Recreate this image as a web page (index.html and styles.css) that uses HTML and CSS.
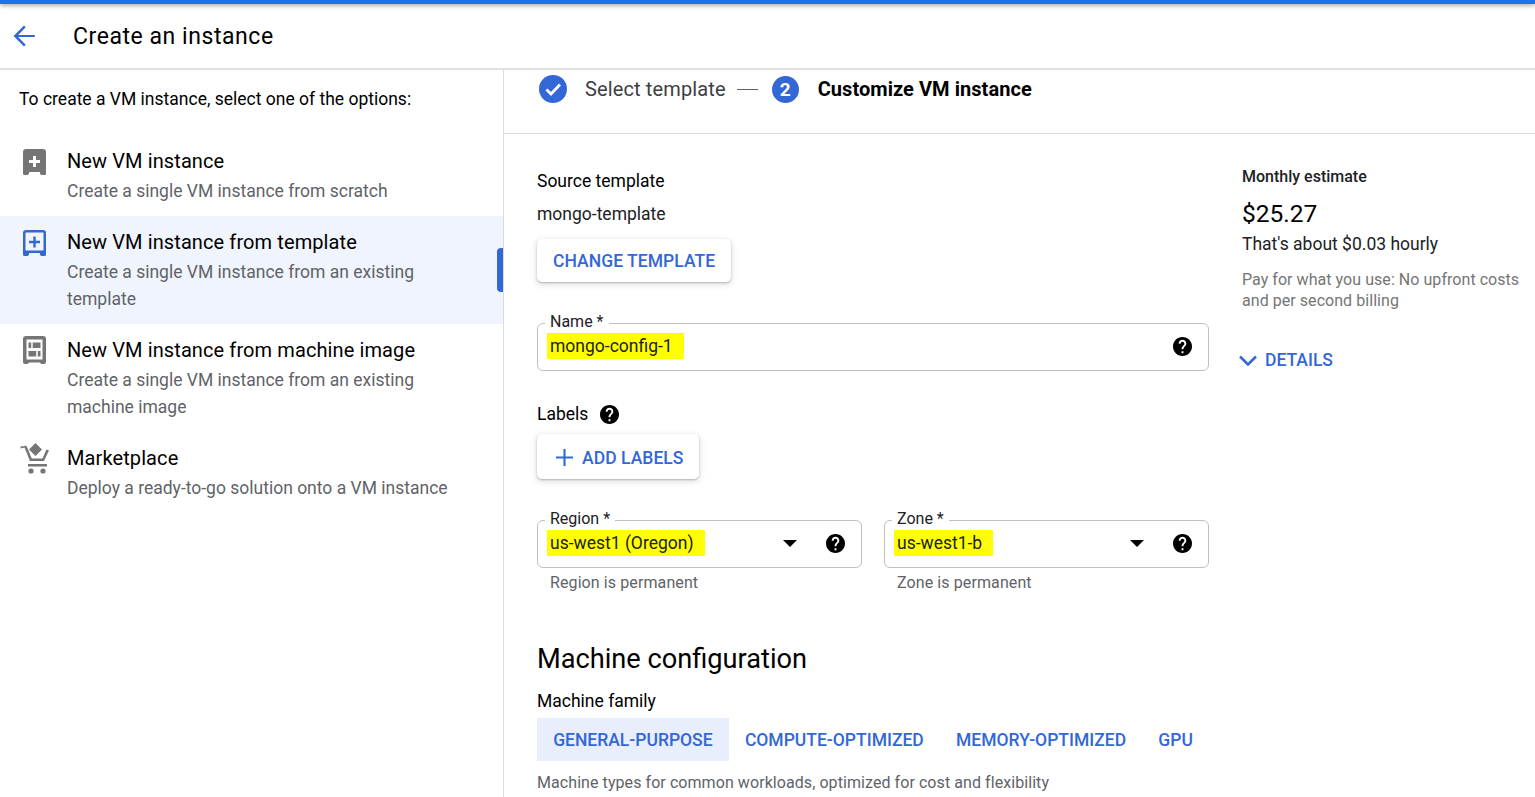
FILE: index.html
```html
<!DOCTYPE html>
<html lang="en">
<head>
    <meta charset="UTF-8">
    <meta name="viewport" content="width=device-width, initial-scale=1.0">
    <title>Create an instance</title>
    <link rel="stylesheet" href="styles.css">
</head>
<body>
    <svg class="defs" width="0" height="0" aria-hidden="true">
        <symbol id="help" viewBox="2 2 20 20">
            <path d="M12 2C6.48 2 2 6.48 2 12s4.48 10 10 10 10-4.48 10-10S17.52 2 12 2zm1 17h-2v-2h2v2zm2.07-7.75l-.9.92C13.45 12.9 13 13.5 13 15h-2v-.5c0-1.1.45-2.1 1.17-2.83l1.24-1.26c.37-.36.59-.86.59-1.41 0-1.1-.9-2-2-2s-2 .9-2 2H8c0-2.21 1.79-4 4-4s4 1.79 4 4c0 .88-.36 1.68-.93 2.25z"/>
        </symbol>
    </svg>

    <div class="topline"></div>
    <header class="page-header">
        <svg class="back" viewBox="0 0 24 24" width="26" height="26"><path d="M22 11H6.600l7-7L12 2.400 2.400 12l9.600 9.600 1.600-1.600-7-7H22z"/></svg>
        <h1>Create an instance</h1>
    </header>

    <div class="page-body">
        <nav class="options">
            <p class="intro">To create a VM instance, select one of the options:</p>

            <a class="option">
                <svg class="option-icon" viewBox="0 0 23 26"><path fill-rule="evenodd" d="M3 0h17a3 3 0 0 1 3 3v21.500a1.500 1.500 0 0 1-1.500 1.500h-2.500a2 2 0 0 1-2-2.500a.5.500 0 0 0-.5-.5H6.500a.5.500 0 0 0-.5.500a2 2 0 0 1-2 2.500H1.500A1.500 1.500 0 0 1 0 24.500V3a3 3 0 0 1 3-3zm7 7v4H6v3h4v4h3v-4h4v-3h-4V7z"/></svg>
                <div>
                    <div class="option-title">New VM instance</div>
                    <div class="option-sub">Create a single VM instance from scratch</div>
                </div>
            </a>

            <a class="option selected">
                <svg class="option-icon" viewBox="0 0 23 26"><path fill-rule="evenodd" d="M3 0h17a3 3 0 0 1 3 3v21.500a1.500 1.500 0 0 1-1.500 1.500h-2.500a2 2 0 0 1-2-2.500a.5.500 0 0 0-.5-.5H6.500a.5.500 0 0 0-.5.500a2 2 0 0 1-2 2.500H1.500A1.500 1.500 0 0 1 0 24.500V3a3 3 0 0 1 3-3zm0 2.500a.5.500 0 0 0-.5.500v17a.5.500 0 0 0 .5.500h17a.5.500 0 0 0 .5-.5V3a.5.500 0 0 0-.5-.5zM10.300 6.500v4.300H6v2.400h4.300v4.300h2.400v-4.300H17v-2.400h-4.300V6.500z"/></svg>
                <div>
                    <div class="option-title">New VM instance from template</div>
                    <div class="option-sub">Create a single VM instance from an existing template</div>
                </div>
                <span class="scroll-mark"></span>
            </a>

            <a class="option">
                <svg class="option-icon tall" viewBox="0 0 23 28"><path fill-rule="evenodd" d="M3 0h17a3 3 0 0 1 3 3v23a2 2 0 0 1-2 2h-2a2 2 0 0 1-2-1.500H6a2 2 0 0 1-2 1.500H2a2 2 0 0 1-2-2V3a3 3 0 0 1 3-3zm.500 3.500v20h16v-20zM5.500 6.500H8.200v5.500H5.500zM9.700 6.500H17.500v5.500H9.700zM5.500 15H13.200v5.500H5.500zM14.800 15h2.700v5.500h-2.700z"/></svg>
                <div>
                    <div class="option-title">New VM instance from machine image</div>
                    <div class="option-sub">Create a single VM instance from an existing machine image</div>
                </div>
            </a>

            <a class="option">
                <svg class="option-icon cart" viewBox="0 0 30 31"><path d="M15.500 0l6.500 6.500-6.500 6.500L9 6.500zM0.500 5.500L4.500 4.500 10 18h14L29 7.500l-2.600-1-3.900 9H11.800L6.400 2.700.500 3.500zM8 21h19v2.500H8z"/><circle cx="11" cy="28" r="2.600"/><circle cx="23" cy="28" r="2.600"/></svg>
                <div>
                    <div class="option-title">Marketplace</div>
                    <div class="option-sub">Deploy a ready-to-go solution onto a VM instance</div>
                </div>
            </a>
        </nav>

        <main class="content">
            <div class="stepper">
                <svg class="step-icon" viewBox="0 0 28 28"><circle cx="14" cy="14" r="14"/><path class="tick" d="M7.500 14.500l4.500 4.500 9-9.500"/></svg>
                <span class="step-name">Select template</span>
                <span class="step-dash"></span>
                <span class="step-num">2</span>
                <strong class="step-current">Customize VM instance</strong>
            </div>

            <div class="columns">
                <form class="form">
                    <div class="label source-label">Source template</div>
                    <div class="source-value">mongo-template</div>
                    <button type="button" class="raised change-btn">CHANGE TEMPLATE</button>

                    <div class="field name-field">
                        <label class="field-label">Name *</label>
                        <span class="marked">mongo-config-1</span>
                        <svg class="help"><use href="#help"/></svg>
                    </div>

                    <div class="label labels-row">Labels <svg class="help"><use href="#help"/></svg></div>
                    <button type="button" class="raised add-btn">
                        <svg viewBox="0 0 16 16" width="17" height="17"><path d="M7 0h2v7h7v2H9v7H7V9H0V7h7z"/></svg>
                        ADD LABELS
                    </button>

                    <div class="field-pair">
                        <div>
                            <div class="field">
                                <label class="field-label">Region *</label>
                                <span class="marked">us-west1 (Oregon)</span>
                                <span class="caret"></span>
                                <svg class="help"><use href="#help"/></svg>
                            </div>
                            <div class="hint">Region is permanent</div>
                        </div>
                        <div>
                            <div class="field">
                                <label class="field-label">Zone *</label>
                                <span class="marked">us-west1-b</span>
                                <span class="caret"></span>
                                <svg class="help"><use href="#help"/></svg>
                            </div>
                            <div class="hint">Zone is permanent</div>
                        </div>
                    </div>

                    <h2>Machine configuration</h2>
                    <div class="label family-label">Machine family</div>
                    <div class="tabs">
                        <span class="tab active">GENERAL-PURPOSE</span>
                        <span class="tab">COMPUTE-OPTIMIZED</span>
                        <span class="tab">MEMORY-OPTIMIZED</span>
                        <span class="tab">GPU</span>
                    </div>
                    <div class="tab-note">Machine types for common workloads, optimized for cost and flexibility</div>
                </form>

                <aside class="estimate">
                    <div class="estimate-title">Monthly estimate</div>
                    <div class="estimate-price">$25.27</div>
                    <div class="estimate-hourly">That's about $0.03 hourly</div>
                    <div class="estimate-note">Pay for what you use: No upfront costs and per second billing</div>
                    <div class="details">
                        <svg viewBox="0 0 18 11" width="18" height="11"><path d="M1 1.500l8 8 8-8"/></svg>
                        DETAILS
                    </div>
                </aside>
            </div>
        </main>
    </div>
</body>
</html>
```

FILE: styles.css
```css
* {
    box-sizing: border-box;
}
html, body {
    height: 100%;
}
body {
    margin: 0;
    height: 797px;
    overflow: hidden;
    display: flex;
    flex-direction: column;
    background: #fff;
    color: #202124;
    font-family: Roboto, "Liberation Sans", sans-serif;
    font-size: 17.5px;
}
.defs {
    position: absolute;
}

.topline {
    height: 4px;
    flex: none;
    background: #1a73e8;
    box-shadow: 0 1px 5px rgba(0, 0, 0, 0.45);
}
.page-header {
    height: 66px;
    flex: none;
    display: flex;
    align-items: center;
    padding: 0 0 0 11px;
    border-bottom: 2px solid #e0e0e0;
}
.back {
    fill: #3367d6;
    margin-right: 36px;
}
h1 {
    margin: 0;
    font-size: 23px;
    font-weight: 400;
    color: #000;
    letter-spacing: 0.55px;
}
.page-body {
    flex: 1;
    display: flex;
    min-height: 0;
}

/* left list */
.options {
    width: 504px;
    flex: none;
    border-right: 1px solid #dadce0;
}
.intro {
    margin: 0;
    padding: 16px 0 0 19px;
    height: 65px;
    line-height: 26px;
    font-size: 17.5px;
    color: #000;
}
.option {
    position: relative;
    display: flex;
    padding: 11px 24px 11px 23px;
}
.option.selected {
    background: #f0f4fc;
}
.option-icon {
    width: 23px;
    height: 26px;
    flex: none;
    margin: 3px 21px 0 0;
    fill: #757575;
}
.selected .option-icon {
    fill: #3367d6;
}
.option-icon.tall {
    height: 28px;
    margin-top: 1px;
}
.option-icon.cart {
    width: 30px;
    height: 31px;
    margin: 0 17px 0 -3px;
}
.option-title {
    font-size: 20px;
    line-height: 30px;
    letter-spacing: 0.1px;
    color: #000;
    margin-bottom: 2px;
}
.option-sub {
    line-height: 27px;
    color: #5f6368;
}
.scroll-mark {
    position: absolute;
    right: 0;
    top: 32px;
    width: 6px;
    height: 44px;
    background: #3367d6;
    border-radius: 4px 0 0 4px;
}

/* right side */
.content {
    flex: 1;
    min-width: 0;
}
.stepper {
    height: 64px;
    padding: 5px 0 0 35px;
    display: flex;
    align-items: flex-start;
    border-bottom: 1px solid #dadce0;
    font-size: 20px;
    line-height: 28px;
}
.step-icon {
    width: 28px;
    height: 28px;
    fill: #3367d6;
    margin-right: 18px;
}
.tick {
    fill: none;
    stroke: #fff;
    stroke-width: 2.800;
}
.step-name {
    color: #3c4043;
    letter-spacing: 0.13px;
}
.step-dash {
    width: 21px;
    height: 1px;
    margin: 14px 14px 0 11px;
    background: #5f6368;
}
.step-num {
    width: 27px;
    height: 27px;
    margin-top: 1px;
    border-radius: 50%;
    background: #3367d6;
    color: #fff;
    font-size: 19px;
    font-weight: 700;
    line-height: 27px;
    text-align: center;
    margin-right: 19px;
}
.step-current {
    font-weight: 700;
    letter-spacing: 0.05px;
    color: #000;
}
.columns {
    display: flex;
    padding: 0 0 0 33px;
}
.form {
    width: 672px;
    flex: none;
    padding-top: 34px;
}
.label {
    line-height: 26px;
    color: #000;
}
.source-value {
    margin-top: 7px;
    line-height: 26px;
    color: #202124;
}
.raised {
    display: flex;
    align-items: center;
    border: 0;
    border-radius: 5px;
    background: #fff;
    color: #3367d6;
    font: 500 17.5px Roboto, "Liberation Sans", sans-serif;
    letter-spacing: 0.05px;
    white-space: nowrap;
    padding: 0 16px;
    box-shadow: 0 1px 2px rgba(60, 64, 67, 0.3), 0 2px 6px 1px rgba(60, 64, 67, 0.15);
}
.change-btn {
    margin-top: 12px;
    height: 43px;
    width: 194px;
}
.add-btn {
    margin-top: 7px;
    height: 45px;
    width: 162px;
    padding: 2px 0 0 19px;
    gap: 9px;
}
.add-btn svg {
    fill: #3367d6;
}
.field {
    position: relative;
    height: 48px;
    padding: 0 16px 0 9px;
    display: flex;
    align-items: center;
    border: 1px solid #bdc1c6;
    border-radius: 6px;
}
.name-field {
    margin-top: 41px;
}
.field-label {
    position: absolute;
    left: 7px;
    top: -11px;
    padding: 0 5px;
    background: #fff;
    font-size: 16px;
    line-height: 18px;
    color: #202124;
}
.marked {
    display: block;
    background: #ffff00;
    height: 26px;
    margin-bottom: 2px;
    padding: 0 11px 0 3px;
    line-height: 26px;
    color: #202124;
    white-space: nowrap;
}
.help {
    width: 19px;
    height: 19px;
    fill: #000;
    flex: none;
}
.field .help {
    margin: 0 0 2px auto;
}
.caret {
    width: 0;
    height: 0;
    margin: 0 0 2px auto;
    border-top: 7px solid #000;
    border-left: 7px solid transparent;
    border-right: 7px solid transparent;
}
.field .caret + .help {
    margin-left: 29px;
}
.labels-row {
    margin-top: 30px;
    display: flex;
    align-items: center;
    gap: 12px;
}
.field-pair {
    margin-top: 41px;
    display: grid;
    grid-template-columns: 325px 325px;
    gap: 22px;
}
.hint {
    padding: 5px 0 0 13px;
    font-size: 16px;
    line-height: 20px;
    letter-spacing: 0.1px;
    color: #5f6368;
}
h2 {
    margin: 48px 0 0;
    font-size: 27.200px;
    font-weight: 400;
    line-height: 36px;
    color: #000;
}
.family-label {
    margin-top: 11px;
}
.tabs {
    margin-top: 4px;
    display: flex;
}
.tab {
    height: 43px;
    padding: 0 16.150px;
    line-height: 45px;
    font-weight: 500;
    color: #3367d6;
    white-space: nowrap;
}
.tab.active {
    background: #e8eefb;
}
.tab-note {
    margin-top: 11px;
    font-size: 16px;
    line-height: 22px;
    letter-spacing: 0.07px;
    color: #5f6368;
}

.estimate {
    margin-left: 33px;
    padding-top: 31px;
    width: 293px;
}
.estimate-title {
    font-size: 16px;
    font-weight: 500;
    line-height: 24px;
    color: #202124;
}
.estimate-price {
    margin-top: 10px;
    font-size: 24.500px;
    line-height: 30px;
    color: #000;
}
.estimate-hourly {
    line-height: 30px;
    color: #202124;
}
.estimate-note {
    margin-top: 10px;
    font-size: 16px;
    line-height: 21px;
    letter-spacing: 0.05px;
    color: #757575;
}
.details {
    margin: 37px 0 0 -3px;
    display: flex;
    align-items: center;
    gap: 8px;
    color: #3367d6;
    font-weight: 500;
    line-height: 24px;
}
.details svg {
    fill: none;
    stroke: #3367d6;
    stroke-width: 2.500;
}
```
